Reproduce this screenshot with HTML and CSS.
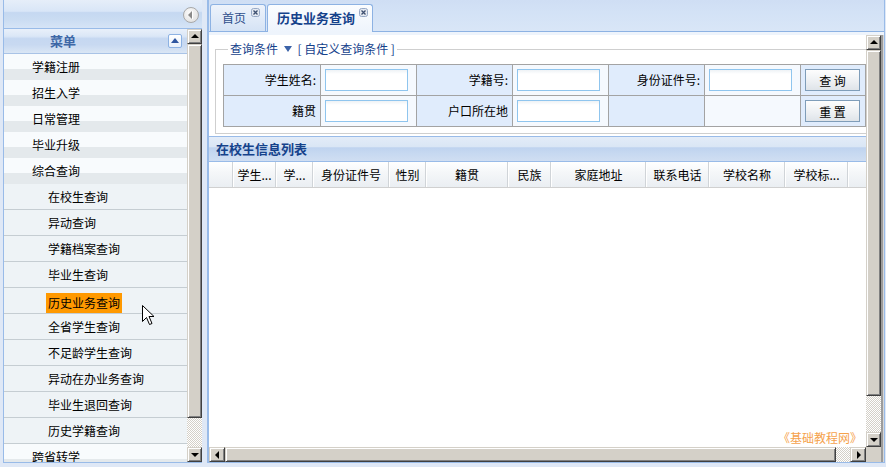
FILE: index.html
```html
<!DOCTYPE html>
<html lang="zh-CN">
<head>
  <meta charset="UTF-8" />
  <title>历史业务查询</title>
  <link rel="stylesheet" href="styles.css">
</head>
<body>
  <div class="viewport">
    <!-- left: navigation menu -->
    <aside class="west">
      <div class="west-head">
        <span class="collapse-tool"></span>
      </div>
      <div class="west-body">
        <div class="menu">
          <div class="menu-head">菜单<span class="tool-up"></span></div>
          <ul class="menu-list">
            <li class="group">学籍注册</li>
            <li class="group">招生入学</li>
            <li class="group">日常管理</li>
            <li class="group">毕业升级</li>
            <li class="group">综合查询</li>
            <li class="leaf">在校生查询</li>
            <li class="leaf">异动查询</li>
            <li class="leaf">学籍档案查询</li>
            <li class="leaf">毕业生查询</li>
            <li class="leaf"><span class="current">历史业务查询</span></li>
            <li class="leaf">全省学生查询</li>
            <li class="leaf">不足龄学生查询</li>
            <li class="leaf">异动在办业务查询</li>
            <li class="leaf">毕业生退回查询</li>
            <li class="leaf">历史学籍查询</li>
            <li class="group">跨省转学</li>
          </ul>
          <svg class="cursor" width="14" height="21" viewBox="0 0 14 21">
            <path d="M0.5 0.5 L0.5 16.5 L4.5 12.5 L7.5 19.5 L10 18.5 L7 11.5 L12 11.5 Z" fill="#fff" stroke="#000" stroke-width="1"/>
          </svg>
        </div>
        <div class="vscroll side">
          <div class="sb-btn arrow-up"></div>
          <div class="sb-thumb"></div>
          <div class="sb-track"></div>
          <div class="sb-btn arrow-down"></div>
        </div>
      </div>
    </aside>

    <div class="split"></div>

    <!-- right: tabbed work area -->
    <main class="center">
      <div class="tabs">
        <div class="tab home">
          <span>首页</span>
          <svg class="tab-close" width="9" height="9" viewBox="0 0 9 9"><rect x="0.5" y="0.5" width="8" height="8" rx="2" fill="#e4e9f1" stroke="#97a9c6"/><path d="M2.5 2.5 L6.5 6.5 M6.5 2.5 L2.5 6.5" stroke="#3d4f70" stroke-width="1.3"/></svg>
        </div>
        <div class="tab active">
          <span>历史业务查询</span>
          <svg class="tab-close" width="9" height="9" viewBox="0 0 9 9"><rect x="0.5" y="0.5" width="8" height="8" rx="2" fill="#e4e9f1" stroke="#97a9c6"/><path d="M2.5 2.5 L6.5 6.5 M6.5 2.5 L2.5 6.5" stroke="#3d4f70" stroke-width="1.3"/></svg>
        </div>
      </div>

      <div class="tab-body">
        <div class="content">
          <form class="query">
            <fieldset>
              <legend>查询条件 <span class="caret"></span> [ 自定义查询条件 ]</legend>
              <table class="query-table">
                <colgroup>
                  <col style="width:97px"><col style="width:96px"><col style="width:96px"><col style="width:96px"><col style="width:96px"><col style="width:96px"><col style="width:65px">
                </colgroup>
                <tr>
                  <td class="label">学生姓名:</td>
                  <td class="field"><input type="text"></td>
                  <td class="label">学籍号:</td>
                  <td class="field"><input type="text"></td>
                  <td class="label">身份证件号:</td>
                  <td class="field"><input type="text"></td>
                  <td class="label btn-cell"><button type="button">查 询</button></td>
                </tr>
                <tr>
                  <td class="label">籍贯</td>
                  <td class="field"><input type="text"></td>
                  <td class="label">户口所在地</td>
                  <td class="field"><input type="text"></td>
                  <td class="label"></td>
                  <td class="field"></td>
                  <td class="label btn-cell"><button type="button">重 置</button></td>
                </tr>
              </table>
            </fieldset>
          </form>

          <section class="grid">
            <div class="grid-title">在校生信息列表</div>
            <div class="grid-cols">
              <div class="col rn"></div>
              <div class="col w43">学生...</div>
              <div class="col w37">学...</div>
              <div class="col w76">身份证件号</div>
              <div class="col w37">性别</div>
              <div class="col w82">籍贯</div>
              <div class="col w43">民族</div>
              <div class="col w95">家庭地址</div>
              <div class="col w63">联系电话</div>
              <div class="col w76">学校名称</div>
              <div class="col w63">学校标...</div>
              <div class="col rest"></div>
            </div>
            <div class="grid-body"></div>
          </section>

          <span class="watermark">《基础教程网》</span>
        </div>

        <div class="vscroll main-v">
          <div class="sb-btn arrow-up"></div>
          <div class="sb-thumb"></div>
          <div class="sb-track"></div>
          <div class="sb-btn arrow-down"></div>
        </div>
        <div class="edge"></div>
        <div class="hscroll">
          <div class="sb-btn arrow-left"></div>
          <div class="sb-thumb"></div>
          <div class="sb-track"></div>
          <div class="sb-btn arrow-right"></div>
        </div>
        <div class="corner"></div>
      </div>
    </main>
  </div>
</body>
</html>
```

FILE: styles.css
```css
* {
  box-sizing: border-box;
}

body {
  margin: 0;
  font: 12px/1.2 "Noto Sans CJK SC", "Noto Sans", sans-serif;
  color: #000;
  background: #dfe8f6;
  overflow: hidden;
}

ul {
  margin: 0;
  padding: 0;
  list-style: none;
}

/* ----------- LAYOUT ----------- */
.viewport {
  display: flex;
  height: 467px;
  padding: 0 1px 4px 3px;
}

/* --- LEFT MENU PANEL --- */
.west {
  width: 199px;
  display: flex;
  flex-direction: column;
  border-left: 1px solid #99bbe8;
  border-bottom: 1px solid #99bbe8;
}

.west-head {
  height: 29px;
  flex: none;
  display: flex;
  justify-content: flex-end;
  padding: 7px 3px 0 0;
  border-bottom: 1px solid #99bbe8;
  background: linear-gradient(#e6eef9, #d9e6f7 40%, #c5d8f1 45%, #cadcf2 70%, #d6e4f6);
}

.collapse-tool {
  position: relative;
  width: 16px;
  height: 16px;
  border: 1px solid #a8a8a8;
  border-radius: 50%;
  background: radial-gradient(circle at 40% 35%, #fafafa, #dcdcdc);
}

.collapse-tool::after {
  content: "";
  position: absolute;
  left: 4px;
  top: 3px;
  border: 4px solid transparent;
  border-left: 0;
  border-right-color: #8a8a8a;
  box-shadow: 1px 0 0 #fff;
}

.west-body {
  flex: 1;
  min-height: 0;
  display: flex;
}

.menu {
  position: relative;
  flex: 1;
  overflow: hidden;
  background: #eef3f6;
}

.menu-head {
  height: 25px;
  display: flex;
  align-items: center;
  padding: 0 5px 0 46px;
  border-bottom: 1px solid #a9c3e6;
  font-size: 13px;
  font-weight: bold;
  color: #3d67a6;
  background: linear-gradient(#e9f0fa, #dbe7f7 30%, #c6d8f1 40%, #c8d9f1 65%, #dae6f5);
}

.tool-up {
  position: relative;
  margin-left: auto;
  width: 14px;
  height: 14px;
  border: 1px solid #8db2e3;
  border-radius: 2px;
  background: linear-gradient(#fff, #e8f0fb);
}

.tool-up::after {
  content: "";
  position: absolute;
  left: 2px;
  top: 3px;
  border: 4px solid transparent;
  border-top: 0;
  border-bottom: 5px solid #2f56a0;
}

.menu-list li {
  height: 26px;
  line-height: 26px;
  white-space: nowrap;
}

.group {
  padding-left: 28px;
  background: linear-gradient(#f8fbfd 57%, #e4e9ec 57%);
}

.leaf {
  padding-left: 44px;
  line-height: 25px !important;
  border-bottom: 1px solid #c5cdd2;
  background: #eef3f6;
}

.current {
  display: inline-block;
  margin-left: -2px;
  padding: 0 2px;
  line-height: 20px;
  vertical-align: middle;
  background: #ff9900;
}

.cursor {
  position: absolute;
  left: 138px;
  top: 276px;
}

/* --- CLASSIC SCROLLBARS --- */
.vscroll {
  width: 15px;
  flex: none;
  display: flex;
  flex-direction: column;
}

.hscroll {
  display: flex;
}

.sb-btn,
.sb-thumb {
  position: relative;
  flex: none;
  background: #d4d0c8;
  border: 1px solid;
  border-color: #d4d0c8 #404040 #404040 #d4d0c8;
  box-shadow: inset 1px 1px #fff, inset -1px -1px #808080;
}

.sb-btn {
  width: 15px;
  height: 15px;
}

.hscroll .sb-btn {
  width: 16px;
}

.sb-track {
  flex: 1;
  background: repeating-conic-gradient(#d4d0c8 0 25%, #fff 0 50%) 0 0 / 2px 2px;
}

.side .sb-thumb {
  height: 374px;
}

.main-v .sb-thumb {
  height: 346px;
}

.hscroll .sb-thumb {
  width: 611px;
}

.sb-btn::after {
  content: "";
  position: absolute;
  border: 4px solid transparent;
}

.arrow-up::after {
  left: 3px;
  top: 4px;
  border-top: 0;
  border-bottom-color: #000;
}

.arrow-down::after {
  left: 3px;
  top: 5px;
  border-bottom: 0;
  border-top-color: #000;
}

.arrow-left::after {
  left: 5px;
  top: 3px;
  border-left: 0;
  border-right-color: #000;
}

.arrow-right::after {
  left: 6px;
  top: 3px;
  border-right: 0;
  border-left-color: #000;
}

/* --- SPLITTER --- */
.split {
  width: 6px;
  flex: none;
  border-right: 1px solid #99bbe8;
}

/* --- CENTER PANEL --- */
.center {
  flex: 1;
  display: flex;
  flex-direction: column;
  border: 1px solid #99bbe8;
  border-top: 0;
}

.tabs {
  height: 32px;
  flex: none;
  display: flex;
  align-items: flex-end;
  gap: 1px;
  padding-left: 1px;
  border-bottom: 1px solid #8db2e3;
  background: linear-gradient(#cfdef4, #d3e2f6 40%, #d9e6f7);
}

.tab {
  height: 27px;
  display: flex;
  border: 1px solid #8db2e3;
  border-bottom: 0;
  border-radius: 3px 3px 0 0;
  line-height: 25px;
  color: #2e4f8c;
  white-space: nowrap;
}

.tab-close {
  margin-top: 3px;
  flex: none;
}

.home {
  width: 56px;
  padding-left: 11px;
  gap: 5px;
  background: linear-gradient(#eef3fb, #d5e3f5);
}

.active {
  width: 106px;
  height: 28px;
  margin-bottom: -1px;
  padding-left: 9px;
  gap: 4px;
  font-size: 13px;
  font-weight: bold;
  color: #15428b;
  background: linear-gradient(#fbfdff, #eef4fc);
}

.tab-body {
  flex: 1;
  display: grid;
  grid-template-columns: 657px 15px 3px;
  grid-template-rows: 412px 15px;
  border-top: 3px solid #eef4fc;
}

.content {
  position: relative;
  overflow: hidden;
  display: flex;
  flex-direction: column;
  background: #fff;
}

.edge {
  grid-row: 1 / 3;
  grid-column: 3;
  background: linear-gradient(90deg, #9c9c9c 0 2px, #d8d8d8 2px);
}

.corner {
  background: #d4d0c8;
}

/* --- QUERY FORM --- */
.query {
  margin: 0;
  padding: 7px 0 2px;
}

fieldset {
  margin: 0 -6px 0 6px;
  padding: 0 0 6px 7px;
  border: 1px solid #cfcfcf;
}

legend {
  margin-left: 5px;
  padding: 0 2px;
  line-height: 14px;
  color: #15428b;
}

.caret {
  display: inline-block;
  margin: 0 3px;
  border: 4px solid transparent;
  border-bottom: 0;
  border-top: 6px solid #3c63a8;
  vertical-align: 2px;
}

.query-table {
  margin-top: 8px;
  width: 642px;
  table-layout: fixed;
  border-collapse: collapse;
}

.query-table tr {
  height: 31px;
}

.query-table td {
  padding: 0 4px;
  border: 1px solid #a3a3a3;
  white-space: nowrap;
}

.label {
  text-align: right;
  background: #e0ecfc;
}

.field {
  background: #f5f9fe;
}

.btn-cell {
  text-align: left;
}

input[type="text"] {
  display: block;
  width: 83px;
  height: 22px;
  margin: 0;
  border: 1px solid #8fc5ee;
  background: linear-gradient(#eef2f5, #fff 4px);
}

button {
  display: block;
  width: 55px;
  height: 22px;
  padding: 0;
  border: 1px solid #7f9db9;
  font: 12px "Noto Sans CJK SC", sans-serif;
  color: #000;
  background: linear-gradient(#fdfdfd, #eceff2 60%, #dfe4e9);
}

/* --- STUDENT GRID --- */
.grid {
  flex: 1;
  display: flex;
  flex-direction: column;
  border-top: 1px solid #99bbe8;
}

.grid-title {
  height: 25px;
  flex: none;
  padding-left: 7px;
  border-bottom: 1px solid #99bbe8;
  font-size: 13px;
  font-weight: bold;
  line-height: 24px;
  color: #15428b;
  background: linear-gradient(#e3ecf8, #dae6f5 40%, #bfd3ef 45%, #c7d9f1 70%, #d0def2);
}

.grid-cols {
  height: 26px;
  flex: none;
  display: flex;
  border-bottom: 1px solid #d0d0d0;
  background: linear-gradient(#fff, #f5f7f9 40%, #eaeef2);
}

.col {
  flex: none;
  text-align: center;
  line-height: 25px;
  white-space: nowrap;
  overflow: hidden;
  border-right: 1px solid #d0d4d8;
}

.col + .col {
  border-left: 1px solid #fff;
}

.rn { width: 24px; }
.w37 { width: 37px; }
.w43 { width: 43px; }
.w63 { width: 63px; }
.w76 { width: 76px; }
.w82 { width: 82px; }
.w95 { width: 95px; }

.rest {
  flex: 1;
  border-right: 0;
}

.grid-body {
  flex: 1;
  background: #fff;
}

.watermark {
  position: absolute;
  right: 4px;
  bottom: 2px;
  font-size: 12px;
  color: #f5a24c;
}
```
